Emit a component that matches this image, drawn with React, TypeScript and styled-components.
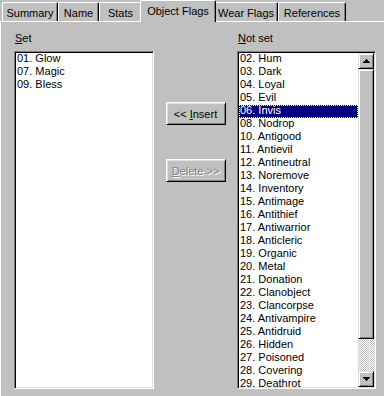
import React from 'react';
import styled, { createGlobalStyle, css } from 'styled-components';

const GlobalStyle = createGlobalStyle`
  html, body {
    margin: 0;
    padding: 0;
    background: #c0c0c0;
  }
  body {
    font-family: "Liberation Sans", Arial, sans-serif;
    font-size: 11px;
    color: #000;
  }
`;

const Window = styled.div`
  width: 384px;
  height: 396px;
  overflow: hidden;
  background: #c0c0c0;
`;

const TabStrip = styled.div`
  display: flex;
  align-items: flex-end;
  height: 21px;
  padding-left: 2px;
`;

const Tab = styled.div<{ $w: number; $active?: boolean }>`
  box-sizing: border-box;
  width: ${(p) => p.$w}px;
  height: 19px;
  padding-top: 4px;
  line-height: 13px;
  text-align: center;
  white-space: nowrap;
  background: #c0c0c0;
  border-top: 1px solid #fff;
  border-left: 1px solid #fff;
  border-right: 1px solid #000;
  border-radius: 2px 2px 0 0;
  box-shadow: inset -1px 0 #808080;

  ${(p) =>
    p.$active &&
    css`
      position: relative;
      z-index: 1;
      width: ${p.$w + 4}px;
      height: 22px;
      margin: 0 -2px -1px;
    `}
`;

const Panel = styled.div`
  border-top: 1px solid #fff;
  border-left: 1px solid #fff;
  height: 375px;
`;

const Content = styled.div`
  display: flex;
  padding: 10px 0 0 13px;
`;

const Column = styled.div<{ $w: number }>`
  width: ${(p) => p.$w}px;
  display: flex;
  flex-direction: column;
`;

const Label = styled.div`
  height: 13px;
  line-height: 13px;
  padding-left: 1px;
  margin-bottom: 6px;
`;

const Key = styled.span`
  text-decoration: underline;
  text-underline-offset: 1px;
`;

const ButtonColumn = styled.div`
  width: 83px;
  display: flex;
  flex-direction: column;
  align-items: center;
  padding-top: 70px;
  gap: 34px;
`;

const PushButton = styled.button`
  box-sizing: border-box;
  width: 60px;
  height: 23px;
  padding: 0;
  margin: 0;
  font-family: inherit;
  font-size: 11px;
  color: #000;
  background: #c0c0c0;
  border: 1px solid;
  border-color: #fff #000 #000 #fff;
  box-shadow: inset 1px 1px #dfdfdf, inset -1px -1px #808080;
  cursor: default;

  &:disabled {
    color: #808080;
    text-shadow: 1px 1px #fff;
  }
`;

const ListBox = styled.div`
  box-sizing: border-box;
  height: 338px;
  display: flex;
  background: #fff;
  border: 1px solid;
  border-color: #808080 #fff #fff #808080;
  box-shadow: inset 1px 1px #000, inset -1px -1px #dfdfdf;
  padding: 1px;
`;

const Items = styled.div`
  flex: 1;
  overflow: hidden;
`;

const Item = styled.div<{ $selected?: boolean }>`
  position: relative;
  height: 13px;
  line-height: 11px;
  padding-left: 1px;
  white-space: nowrap;

  ${(p) =>
    p.$selected &&
    css`
      background: #000080;
      color: #fff;

      &::after {
        content: '';
        position: absolute;
        inset: 0;
        border: 1px dotted #ffff80;
      }
    `}
`;

const ScrollBar = styled.div`
  width: 16px;
  display: flex;
  flex-direction: column;
`;

const raised = css`
  box-sizing: border-box;
  background: #c0c0c0;
  border: 1px solid;
  border-color: #dfdfdf #000 #000 #dfdfdf;
  box-shadow: inset 1px 1px #fff, inset -1px -1px #808080;
`;

const ScrollButton = styled.div`
  ${raised};
  height: 16px;
  display: flex;
  align-items: center;
  justify-content: center;
`;

const Thumb = styled.div<{ $h: number }>`
  ${raised};
  height: ${(p) => p.$h}px;
`;

const Track = styled.div`
  flex: 1;
  background: repeating-conic-gradient(#c0c0c0 0 25%, #fff 0 50%) 0 0 / 2px 2px;
`;

const Arrow: React.FC<{ down?: boolean }> = ({ down }) => (
  <svg width="7" height="4" viewBox="0 0 7 4" shapeRendering="crispEdges">
    {[0, 1, 2, 3].map((i) => (
      <rect key={i} x={3 - i} y={down ? 3 - i : i} width={1 + 2 * i} height={1} fill="#000" />
    ))}
  </svg>
);

const tabs = [
  { name: 'Summary', w: 56 },
  { name: 'Name', w: 41 },
  { name: 'Stats', w: 43 },
  { name: 'Object Flags', w: 72, active: true },
  { name: 'Wear Flags', w: 64 },
  { name: 'References', w: 68 },
];

const setFlags = ['01. Glow', '07. Magic', '09. Bless'];

const notSetFlags = [
  '02. Hum',
  '03. Dark',
  '04. Loyal',
  '05. Evil',
  '06. Invis',
  '08. Nodrop',
  '10. Antigood',
  '11. Antievil',
  '12. Antineutral',
  '13. Noremove',
  '14. Inventory',
  '15. Antimage',
  '16. Antithief',
  '17. Antiwarrior',
  '18. Anticleric',
  '19. Organic',
  '20. Metal',
  '21. Donation',
  '22. Clanobject',
  '23. Clancorpse',
  '24. Antivampire',
  '25. Antidruid',
  '26. Hidden',
  '27. Poisoned',
  '28. Covering',
  '29. Deathrot',
];

const App: React.FC = () => {
  const selected = '06. Invis';

  return (
    <Window>
      <GlobalStyle />
      <TabStrip>
        {tabs.map((t) => (
          <Tab key={t.name} $w={t.w} $active={t.active}>
            {t.name}
          </Tab>
        ))}
      </TabStrip>
      <Panel>
        <Content>
          <Column $w={140}>
            <Label>
              <Key>S</Key>et
            </Label>
            <ListBox>
              <Items>
                {setFlags.map((f) => (
                  <Item key={f}>{f}</Item>
                ))}
              </Items>
            </ListBox>
          </Column>

          <ButtonColumn>
            <PushButton>
              &lt;&lt; <Key>I</Key>nsert
            </PushButton>
            <PushButton disabled>
              <Key>D</Key>elete &gt;&gt;
            </PushButton>
          </ButtonColumn>

          <Column $w={139}>
            <Label>
              <Key>N</Key>ot set
            </Label>
            <ListBox>
              <Items>
                {notSetFlags.map((f) => (
                  <Item key={f} $selected={f === selected}>
                    {f}
                  </Item>
                ))}
              </Items>
              <ScrollBar>
                <ScrollButton>
                  <Arrow />
                </ScrollButton>
                <Thumb $h={270} />
                <Track />
                <ScrollButton>
                  <Arrow down />
                </ScrollButton>
              </ScrollBar>
            </ListBox>
          </Column>
        </Content>
      </Panel>
    </Window>
  );
};

export default App;
